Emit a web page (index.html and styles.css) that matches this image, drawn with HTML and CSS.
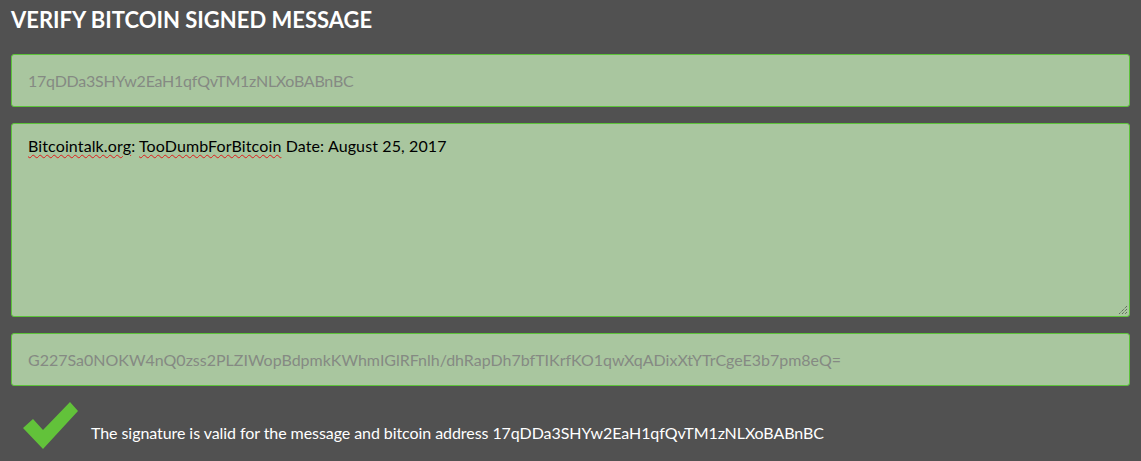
FILE: index.html
```html
<!DOCTYPE html>
<html>
<head>
<meta charset="utf-8">
<link rel="stylesheet" href="styles.css">
</head>
<body>
<div class="page">
  <h1 class="title">VERIFY BITCOIN SIGNED MESSAGE</h1>
  <input class="field field-address" type="text" placeholder="17qDDa3SHYw2EaH1qfQvTM1zNLXoBABnBC">
  <div class="area"><span class="spell">Bitcointalk.org</span>: <span class="spell">TooDumbForBitcoin</span> Date: August 25, 2017<span class="grip"><svg width="10" height="10" viewBox="0 0 10 10"><path d="M9 1L1 9M9 4L4 9M9 7L7 9" stroke="#444" stroke-width="1" stroke-dasharray="1 1" fill="none"/></svg></span></div>
  <input class="field" type="text" placeholder="G227Sa0NOKW4nQ0zss2PLZIWopBdpmkKWhmIGlRFnlh/dhRapDh7bfTIKrfKO1qwXqADixXtYTrCgeE3b7pm8eQ=">
  <div class="result">
    <svg class="check" width="56" height="48" viewBox="0 0 56 48"><polygon points="0,26 10,17 20,28 47,0 55,9 20,47" fill="#62c23a"/></svg>
    <span class="result-text">The signature is valid for the message and bitcoin address 17qDDa3SHYw2EaH1qfQvTM1zNLXoBABnBC</span>
  </div>
</div>
</body>
</html>
```
FILE: styles.css
```css
html, body {
  margin: 0;
  padding: 0;
  background: #515151;
  font-family: Lato, "Noto Sans", sans-serif;
}
.page {
  padding: 6px 11px 0 11px;
  display: flex;
  flex-direction: column;
}
.title {
  margin: 0;
  font-size: 22px;
  line-height: 28px;
  font-weight: 700;
  color: #ffffff;
}
.field {
  margin-top: 20px;
  height: 53px;
  box-sizing: border-box;
  width: 100%;
  background: #a9c69f;
  border: 1px solid #5cc33a;
  border-radius: 3px;
  padding: 0 16px;
  font-family: Lato, "Noto Sans", sans-serif;
  font-size: 16px;
  color: #000;
  outline: none;
}
.field::placeholder {
  color: #858a83;
}
.field-address {
  letter-spacing: -0.25px;
}
.area {
  position: relative;
  margin-top: 16px;
  height: 194px;
  box-sizing: border-box;
  background: #a9c69f;
  border: 1px solid #5cc33a;
  border-radius: 3px;
  padding: 10px 16px;
  font-size: 16px;
  line-height: 24px;
  letter-spacing: 0.12px;
  color: #000;
}
.area + .field {
  margin-top: 16px;
}
.spell {
  text-decoration: underline wavy #e01b1b;
  text-decoration-thickness: 1px;
  text-underline-offset: 2px;
}
.grip {
  position: absolute;
  right: 1px;
  bottom: 1px;
  width: 10px;
  height: 10px;
  display: block;
}
.grip svg {
  display: block;
}
.result {
  display: flex;
  align-items: center;
  margin-top: 16px;
  padding-left: 12px;
}
.check {
  display: block;
  flex: none;
}
.result-text {
  margin-left: 12px;
  margin-top: 12px;
  color: #ffffff;
  font-size: 16px;
  letter-spacing: -0.07px;
}
```
